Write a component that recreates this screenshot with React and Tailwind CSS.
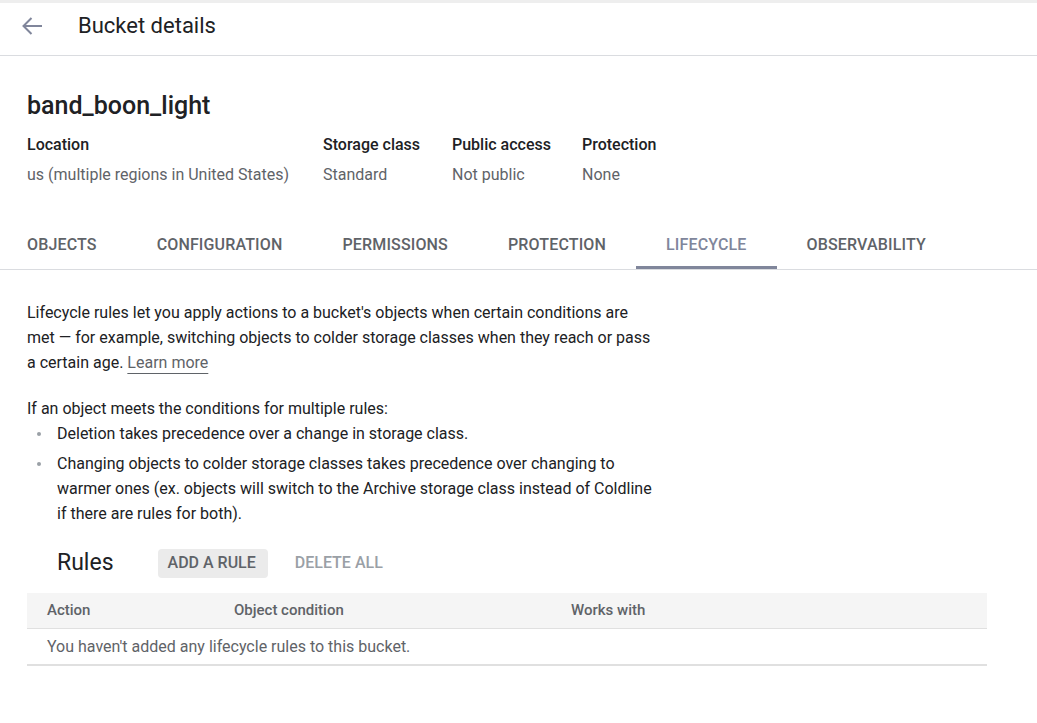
import React from 'react'

const meta = [
  { label: 'Location', value: 'us (multiple regions in United States)', w: 'w-[296px]' },
  { label: 'Storage class', value: 'Standard', w: 'w-[129px]' },
  { label: 'Public access', value: 'Not public', w: 'w-[130px]' },
  { label: 'Protection', value: 'None', w: '' },
]

const tabs = ['OBJECTS', 'CONFIGURATION', 'PERMISSIONS', 'PROTECTION', 'LIFECYCLE', 'OBSERVABILITY']

function Bullet() {
  return (
    <span className="w-[30px] shrink-0 flex items-start pl-[10px] pt-[11px]">
      <span className="w-[4px] h-[4px] rounded-full bg-[#9aa0a6]" />
    </span>
  )
}

export default function App() {
  return (
    <div className="min-h-screen bg-white text-[#202124] font-['Roboto',sans-serif]">
      {/* Top bar */}
      <div className="h-[3px] bg-[#eeeeee]" />
      <div className="h-[53px] flex items-center pb-[6px] border-b border-[#dadce0]">
        <button className="ml-[22px] w-[20px] h-[18px] flex items-center justify-center text-[#80869b]">
          <svg width="20" height="18" viewBox="0 0 20 18" fill="none" stroke="currentColor" strokeWidth="2">
            <path d="M1.5 9H20" />
            <path d="M9.5 1L1.5 9l8 8" />
          </svg>
        </button>
        <h1 className="ml-[36px] text-[22px] leading-none">Bucket details</h1>
      </div>

      {/* Bucket header */}
      <div className="px-[27px] pt-[35px]">
        <h2 className="text-[25px] font-medium leading-[30px]">band_boon_light</h2>
        <div className="flex mt-[14px]">
          {meta.map((m) => (
            <div key={m.label} className={m.w}>
              <div className="text-[16px] font-medium leading-[20px]">{m.label}</div>
              <div className="text-[16px] leading-[20px] mt-[10px] text-[#5f6368]">{m.value}</div>
            </div>
          ))}
        </div>
      </div>

      {/* Tabs */}
      <div className="mt-[36px] flex border-b border-[#dadce0]">
        {tabs.map((t, i) => (
          <div
            key={t}
            className={`h-[48px] flex items-center text-[16px] font-medium tracking-[0.15px] ${
              i === 0 ? 'pl-[27px] pr-[30px]' : 'px-[30px]'
            } ${
              t === 'LIFECYCLE'
                ? 'text-[#80869b] border-b-[3px] border-[#80869b] pt-[3px]'
                : 'text-[#5f6368]'
            }`}
          >
            {t}
          </div>
        ))}
      </div>

      {/* Lifecycle content */}
      <div className="px-[27px] pt-[30px]">
        <p className="text-[16px] leading-[25px] w-[660px]">
          Lifecycle rules let you apply actions to a bucket's objects when certain conditions are
          <br />
          met — for example, switching objects to colder storage classes when they reach or pass
          <br />
          a certain age.{' '}
          <a className="text-[#5f6368] underline decoration-[#5f6368] underline-offset-[5px]">Learn more</a>
        </p>

        <p className="text-[16px] leading-[25px] mt-[21px]">If an object meets the conditions for multiple rules:</p>
        <ul className="text-[16px] leading-[25px] w-[660px]">
          <li className="flex">
            <Bullet />
            <span>Deletion takes precedence over a change in storage class.</span>
          </li>
          <li className="flex mt-[5px]">
            <Bullet />
            <span>
              Changing objects to colder storage classes takes precedence over changing to
              <br />
              warmer ones (ex. objects will switch to the Archive storage class instead of Coldline
              <br />
              if there are rules for both).
            </span>
          </li>
        </ul>

        {/* Rules */}
        <div className="flex items-center mt-[22px] pl-[30px]">
          <h3 className="text-[23px] leading-[30px] mr-[44px]">Rules</h3>
          <button className="h-[29px] pl-[10px] pr-[12px] rounded-[4px] bg-[#ebebeb] text-[16px] font-medium text-[#5f6368]">
            ADD A RULE
          </button>
          <button className="h-[29px] px-[10px] ml-[17px] text-[16px] font-medium text-[#9aa0a6]">DELETE ALL</button>
        </div>

        <div className="mt-[15px] w-[960px] border-b-2 border-[#e0e0e0]">
          <div className="h-[36px] flex items-center bg-[#f5f5f5] border-b border-[#e0e0e0] text-[15px] font-medium text-[#5f6368]">
            <div className="w-[207px] pl-[20px]">Action</div>
            <div className="w-[337px]">Object condition</div>
            <div>Works with</div>
          </div>
          <div className="h-[35px] flex items-center pl-[20px] text-[16px] text-[#5f6368]">
            You haven't added any lifecycle rules to this bucket.
          </div>
        </div>
      </div>
    </div>
  )
}
